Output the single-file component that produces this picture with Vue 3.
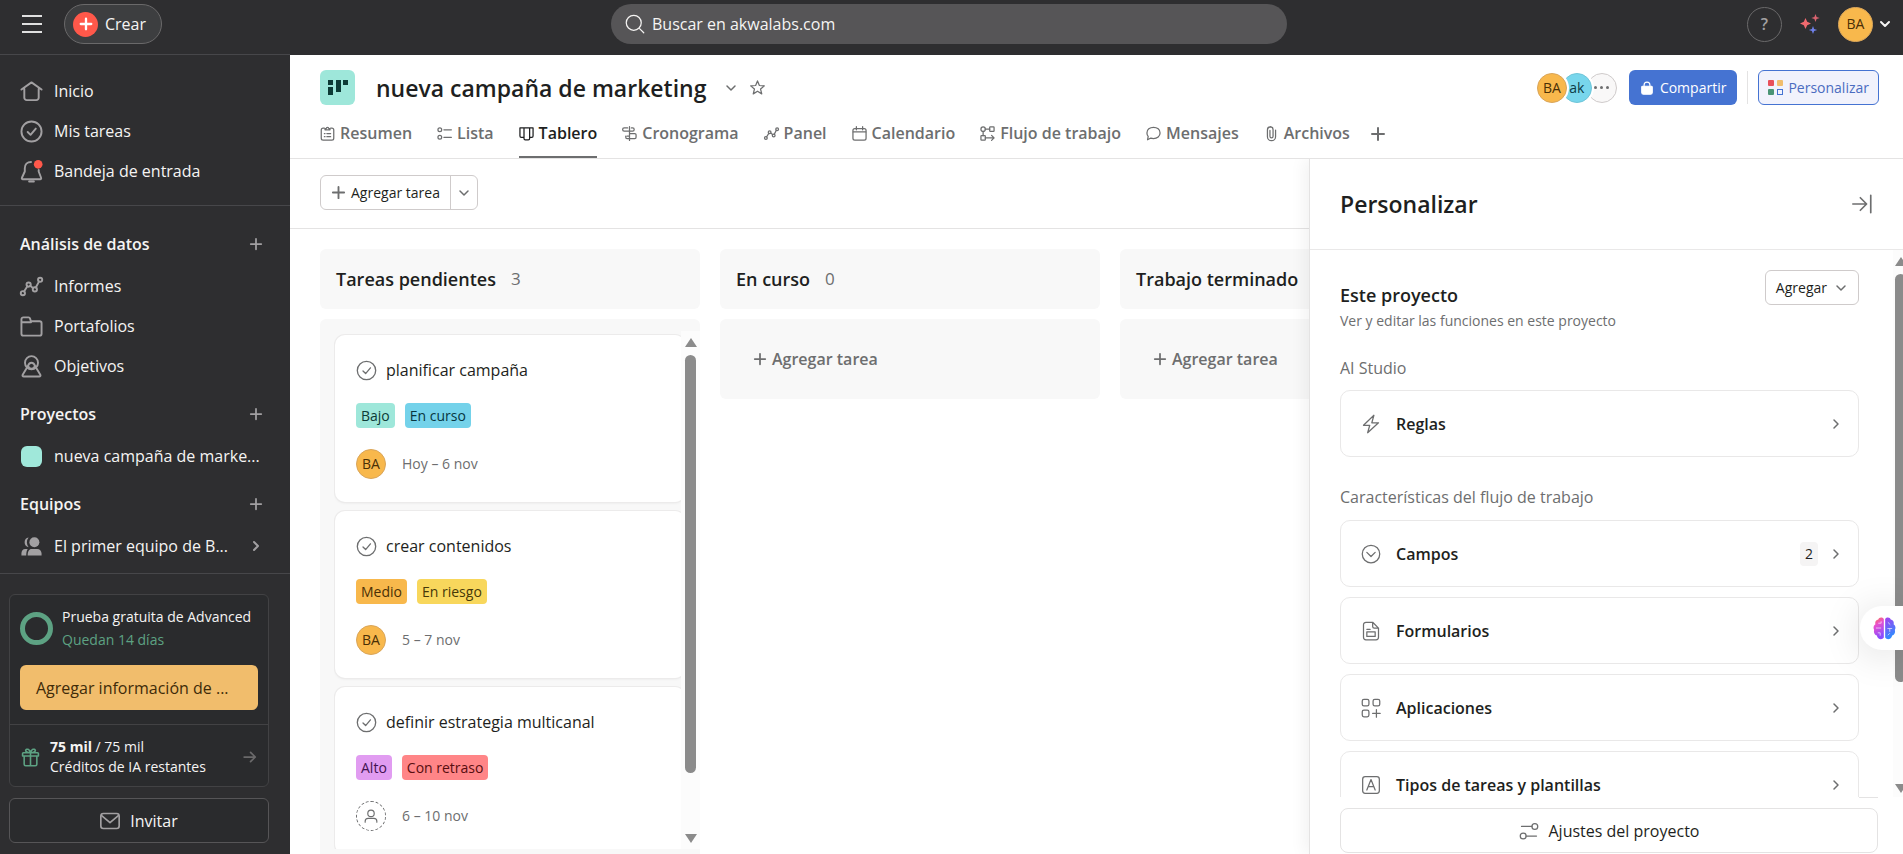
<script setup>
import { ref } from 'vue'

const icons = {
  home: '<path d="M1.500 10 12 2.500 22.500 10M4.500 9v9.500a2.500 2.500 0 0 0 2.500 2.500h10a2.500 2.500 0 0 0 2.500-2.500V9"/>',
  check: '<circle cx="12" cy="12" r="10.500"/><path d="m8 12.500 3 3 5.500-6.500"/>',
  bell: '<path d="M11.500 2C7.500 2 5 5 5 8.500v3.500L2 18.500c-.3.800 0 1.500 1 1.500h18c1 0 1.300-.7 1-1.500L19.500 12v-1.500M9.500 22.500h5"/><circle cx="19" cy="4.500" r="4.500" fill="#ff584a" stroke="none"/>',
  chart: '<circle cx="3" cy="19" r="2.200"/><circle cx="9" cy="10" r="2.200"/><circle cx="15.500" cy="15" r="2.200"/><circle cx="21" cy="5" r="2.200"/><path d="m4.200 17.200 3.500-5.400M10.700 11.300l3 2.400M16.500 13l3.300-6.100"/>',
  folder: '<path d="M1.500 19.500v-15a2 2 0 0 1 2-2H9a1.500 1.500 0 0 1 1.400 1l1 3h9.100a2 2 0 0 1 2 2v11a2 2 0 0 1-2 2h-17a2 2 0 0 1-2-2ZM1.500 7.500h10"/>',
  goal: '<circle cx="12" cy="8" r="6.800"/><path d="m8.300 11.500-5.500 9c-.5 1 0 2 1.200 2h16c1.200 0 1.700-1 1.200-2l-5.500-9C14.800 8.500 13.500 8 12 8s-2.800.5-3.700 3.500ZM8.500 11.500c1 3.800 6 3.800 7 0"/>',
  team: '<g fill="currentColor" stroke="none"><circle cx="15" cy="7.500" r="5.200"/><path d="M9 2.500a5.200 5.200 0 0 0 0 10.200 8 8 0 0 1 0-10.200ZM8 21.500c0-4.500 1.500-7 4-7h6c2.500 0 4.500 2 4.500 4.500v2.500ZM6.500 21.500H1.500V19c0-2.500 1.500-4.500 4-4.500h2.500c-1 1.500-1.500 4-1.500 7Z"/></g>',
  plus: '<path d="M12 3v18M3 12h18"/>',
  right: '<path d="m8 4 8 8-8 8"/>',
  down: '<path d="m4 8 8 8 8-8"/>',
  arrow: '<path d="M2 12h19M13 4l8 8-8 8"/>',
  gift: '<path d="M4 10v10.500a2 2 0 0 0 2 2h12a2 2 0 0 0 2-2V10M3 6h18a1 1 0 0 1 1 1v3H2V7a1 1 0 0 1 1-1ZM12 6v16M12 6C8 6 5.500 4.500 6 2.800 6.800.500 11 1 12 6ZM12 6c4 0 6.500-1.500 6-3.200C17.200.500 13 1 12 6Z"/>',
  mail: '<rect x="1" y="3" width="22" height="18" rx="3"/><path d="m2 5.500 10 8.500L22 5.500"/>',
  search: '<circle cx="10.500" cy="10.500" r="9"/><path d="m17.500 17.500 5 5"/>',
  star: '<path d="m12 1.500 3 7.300 7.900.6-6 5.100 1.900 7.700-6.800-4.200-6.800 4.200 1.900-7.700-6-5.100 7.900-.6Z"/>',
  lock: '<path d="M3 10.500A1.500 1.500 0 0 1 4.500 9h15a1.500 1.500 0 0 1 1.500 1.500v9a3 3 0 0 1-3 3H6a3 3 0 0 1-3-3Z" fill="currentColor"/><path d="M7 9.500V7a5 5 0 0 1 10 0v2.500"/>',
  resumen: '<path d="M7 3.500H5a3 3 0 0 0-3 3v13a3 3 0 0 0 3 3h14a3 3 0 0 0 3-3v-13a3 3 0 0 0-3-3h-2"/><path d="M8 6V4h2a2 2 0 0 1 4 0h2v2ZM7 12h1M11 12h6M7 17h1M11 17h6"/>',
  lista: '<circle cx="4.500" cy="6" r="3"/><circle cx="4.500" cy="18" r="3"/><path d="M11 6h12M11 18h12"/>',
  tablero: '<path d="M1.500 3h21v13a2 2 0 0 1-2 2H17M1.500 3v13a2 2 0 0 0 2 2H8M8 3v17a2 2 0 0 0 2 2h5a2 2 0 0 0 2-2V3"/>',
  cronograma: '<path d="M12 1v22M9 3H3.500a2.500 2.500 0 0 0 0 5H17a2.500 2.500 0 0 0 0-5h-2M12 16h-4M12 12h8.500a2 2 0 0 1 2 2v4a2 2 0 0 1-2 2H8a2 2 0 0 1-2-2v-2"/>',
  calendario: '<rect x="1.500" y="4" width="21" height="18.500" rx="3"/><path d="M2 9.500h20M7 1v5M17 1v5"/>',
  flujo: '<circle cx="5" cy="5" r="3.500"/><rect x="15.500" y="1.500" width="7" height="7" rx="1"/><rect x="1.500" y="15.500" width="7" height="7" rx="1"/><path d="M8.500 5h7M5 8.500v7M8.500 19h14M18.500 15l4 4-4 4"/>',
  mensajes: '<path d="M12 2c6 0 10.500 3.800 10.500 9S18 20 12 20c-1.500 0-3-.2-4.300-.7L2.500 22l1-5.500C2.200 15 1.500 13 1.500 11c0-5.200 4.500-9 10.500-9Z"/>',
  archivos: '<path d="M9.500 7v9.500a2.500 2.500 0 0 0 5 0V6a4.500 4.500 0 0 0-9 0v11a6.500 6.500 0 0 0 13 0V6.500M5.500 6A5 5 0 0 1 14 3"/>',
  rayo: '<path d="M15.500 1.500 3 13.500h7.500L8 22.500l13-12h-8Z"/>',
  campos: '<circle cx="12" cy="12" r="10.500"/><path d="m7 10 5 5 5-5"/>',
  form: '<path d="M14 1.500H6a3 3 0 0 0-3 3v15a3 3 0 0 0 3 3h12a3 3 0 0 0 3-3v-11ZM14 1.500v5a2 2 0 0 0 2 2h5M7 10h4"/><rect x="7" y="13" width="10" height="5.500"/>',
  apps: '<rect x="1.500" y="1.500" width="8" height="8" rx="2"/><rect x="14.500" y="1.500" width="8" height="8" rx="2"/><rect x="1.500" y="14.500" width="8" height="8" rx="2"/><path d="M18.500 14v9M14 18.500h9"/>',
  tipos: '<rect x="2" y="2" width="20" height="20" rx="3"/><path d="m7 18 5-12.500L17 18M8.800 14h6.400"/>',
  ajustes: '<circle cx="19" cy="6.500" r="3.500"/><circle cx="5" cy="18" r="3.500"/><path d="M3 6.500h12.500M8.500 18H21"/>',
  person: '<circle cx="12" cy="7.500" r="5.500"/><path d="M2 22.500v-1.500a5 5 0 0 1 5-5h10a5 5 0 0 1 5 5v1.500"/>',
  collapse: '<path d="M1 12h16M10 4.500l7.500 7.500-7.500 7.500M22.500 1.500v21"/>'
}

const navMain = [
  { icon: 'home', label: 'Inicio' },
  { icon: 'check', label: 'Mis tareas' },
  { icon: 'bell', label: 'Bandeja de entrada' }
]
const navData = [
  { icon: 'chart', label: 'Informes' },
  { icon: 'folder', label: 'Portafolios' },
  { icon: 'goal', label: 'Objetivos' }
]
const tabs = [
  { icon: 'resumen', label: 'Resumen' },
  { icon: 'lista', label: 'Lista' },
  { icon: 'tablero', label: 'Tablero' },
  { icon: 'cronograma', label: 'Cronograma' },
  { icon: 'chart', label: 'Panel' },
  { icon: 'calendario', label: 'Calendario' },
  { icon: 'flujo', label: 'Flujo de trabajo' },
  { icon: 'mensajes', label: 'Mensajes' },
  { icon: 'archivos', label: 'Archivos' }
]
const activeTab = ref('Tablero')
const tasks = [
  { name: 'planificar campaña', tags: [['Bajo', 'aqua'], ['En curso', 'blue']], who: 'BA', date: 'Hoy – 6 nov' },
  { name: 'crear contenidos', tags: [['Medio', 'orange'], ['En riesgo', 'yellow']], who: 'BA', date: '5 – 7 nov' },
  { name: 'definir estrategia multicanal', tags: [['Alto', 'purple'], ['Con retraso', 'red']], who: '', date: '6 – 10 nov' }
]
const emptyColumns = [
  { name: 'En curso', count: '0' },
  { name: 'Trabajo terminado', count: '' }
]
const features = [
  { icon: 'campos', label: 'Campos', count: 2 },
  { icon: 'form', label: 'Formularios' },
  { icon: 'apps', label: 'Aplicaciones' },
  { icon: 'tipos', label: 'Tipos de tareas y plantillas' }
]
</script>

<template>
  <div class="app">
    <header class="topbar">
      <div class="top-left">
        <button class="plain burger" aria-label="Menú"><i></i><i></i><i></i></button>
        <button class="create">
          <span class="create-dot"><svg class="ic s14 heavy" viewBox="0 0 24 24" v-html="icons.plus"></svg></span>Crear
        </button>
      </div>
      <label class="search">
        <svg class="ic s20" viewBox="0 0 24 24" v-html="icons.search"></svg>
        <input type="text" placeholder="Buscar en akwalabs.com" aria-label="Buscar" />
      </label>
      <div class="top-right">
        <button class="help" aria-label="Ayuda">?</button>
        <button class="plain sparkles" aria-label="Asistente de IA">
          <svg viewBox="0 0 20 20">
            <path fill="#f06a6f" d="M5.500 4 7.200 7.800 11 9.500 7.200 11.200 5.500 15 3.800 11.200 0 9.500 3.800 7.800Z" />
            <path fill="#d9636f" d="m15.500 0 1.100 2.900 3.100 1.100-3.100 1.100-1.100 2.900-1.100-2.900L11.300 4l3.100-1.100Z" />
            <path fill="#6f80e8" d="m13 12 1.100 2.900 3.100 1.100-3.100 1.100L13 20l-1.100-2.900L8.800 16l3.100-1.100Z" />
          </svg>
        </button>
        <button class="plain account" aria-label="Cuenta">
          <span class="avatar big">BA</span>
          <svg class="ic s12 heavy" viewBox="0 0 24 24" v-html="icons.down"></svg>
        </button>
      </div>
    </header>

    <div class="body">
      <aside class="sidebar">
        <nav class="nav nav-top">
          <a v-for="n in navMain" :key="n.label" href="#" class="nav-item">
            <svg class="ic s23" viewBox="0 0 24 24" v-html="icons[n.icon]"></svg><span>{{ n.label }}</span>
          </a>
        </nav>
        <nav class="nav nav-groups">
          <div class="group">
            <h2>Análisis de datos</h2>
            <button class="plain" aria-label="Agregar"><svg class="ic s14 mid" viewBox="0 0 24 24" v-html="icons.plus"></svg></button>
          </div>
          <a v-for="n in navData" :key="n.label" href="#" class="nav-item">
            <svg class="ic s23" viewBox="0 0 24 24" v-html="icons[n.icon]"></svg><span>{{ n.label }}</span>
          </a>
          <div class="group next">
            <h2>Proyectos</h2>
            <button class="plain" aria-label="Agregar"><svg class="ic s14 mid" viewBox="0 0 24 24" v-html="icons.plus"></svg></button>
          </div>
          <a href="#" class="nav-item"><b class="swatch"></b><span>nueva campaña de marke...</span></a>
          <div class="group next">
            <h2>Equipos</h2>
            <button class="plain" aria-label="Agregar"><svg class="ic s14 mid" viewBox="0 0 24 24" v-html="icons.plus"></svg></button>
          </div>
          <a href="#" class="nav-item">
            <svg class="ic s23" viewBox="0 0 24 24" v-html="icons.team"></svg>
            <span>El primer equipo de B...</span>
            <svg class="ic s12 heavy" viewBox="0 0 24 24" v-html="icons.right"></svg>
          </a>
        </nav>
        <footer class="side-foot">
          <section class="trial">
            <div class="trial-top">
              <span class="ring"></span>
              <div class="trial-text">
                <p>Prueba gratuita de Advanced</p>
                <p class="green">Quedan 14 días</p>
              </div>
            </div>
            <button class="billing">Agregar información de ...</button>
            <a href="#" class="credits">
              <svg class="ic s19 gift" viewBox="0 0 24 24" v-html="icons.gift"></svg>
              <span><strong>75 mil</strong> / 75 mil<br />Créditos de IA restantes</span>
              <svg class="ic s14 mid" viewBox="0 0 24 24" v-html="icons.arrow"></svg>
            </a>
          </section>
          <button class="invite"><svg class="ic s20" viewBox="0 0 24 24" v-html="icons.mail"></svg>Invitar</button>
        </footer>
      </aside>

      <main class="main">
        <header class="project">
          <div class="title-row">
            <span class="project-icon">
              <svg viewBox="0 0 20 16" fill="#0d3b36">
                <rect width="5" height="5" /><rect y="7" width="5" height="8" />
                <rect x="8" width="5" height="12" /><rect x="15" width="5" height="5" />
              </svg>
            </span>
            <h1>nueva campaña de marketing</h1>
            <button class="plain" aria-label="Acciones"><svg class="ic s12 mid" viewBox="0 0 24 24" v-html="icons.down"></svg></button>
            <button class="plain" aria-label="Favorito"><svg class="ic s15" viewBox="0 0 24 24" v-html="icons.star"></svg></button>
            <div class="title-actions">
              <div class="members">
                <span class="avatar">BA</span><span class="avatar cyan">ak</span><span class="avatar more"><i></i><i></i><i></i></span>
              </div>
              <button class="share"><svg class="ic s14" viewBox="0 0 24 24" v-html="icons.lock"></svg>Compartir</button>
              <span class="rule"></span>
              <button class="customize">
                <svg class="grid-ic" viewBox="0 0 15 15">
                  <rect width="6" height="6" rx="1" fill="#e8505b" /><rect x="9" width="6" height="6" rx="1" fill="#f1bd6c" />
                  <rect y="9" width="6" height="6" rx="1" fill="#4a9475" /><rect x="9.500" y="9.500" width="5" height="5" fill="none" stroke="#4573d2" />
                </svg>Personalizar
              </button>
            </div>
          </div>
          <nav class="tabs">
            <a v-for="t in tabs" :key="t.label" href="#" class="tab" :class="{ active: t.label === activeTab }" @click.prevent="activeTab = t.label">
              <svg class="ic s15" viewBox="0 0 24 24" v-html="icons[t.icon]"></svg>{{ t.label }}
            </a>
            <button class="plain add-tab" aria-label="Agregar vista"><svg class="ic s16 mid" viewBox="0 0 24 24" v-html="icons.plus"></svg></button>
          </nav>
        </header>

        <div class="work">
          <section class="board-area">
            <div class="toolbar">
              <div class="split">
                <button><svg class="ic s15 mid" viewBox="0 0 24 24" v-html="icons.plus"></svg>Agregar tarea</button>
                <button aria-label="Más opciones"><svg class="ic s12 mid" viewBox="0 0 24 24" v-html="icons.down"></svg></button>
              </div>
            </div>
            <div class="board">
              <section class="column">
                <header class="col-head"><h3>Tareas pendientes</h3><span>3</span></header>
                <div class="col-body filled">
                  <div class="cards">
                    <article v-for="t in tasks" :key="t.name" class="card">
                      <div class="card-name"><svg class="ic s21 thin" viewBox="0 0 24 24" v-html="icons.check"></svg>{{ t.name }}</div>
                      <div class="tags"><span v-for="g in t.tags" :key="g[0]" class="tag" :class="g[1]">{{ g[0] }}</span></div>
                      <div class="card-meta">
                        <span v-if="t.who" class="avatar">{{ t.who }}</span>
                        <span v-else class="avatar nobody"><svg class="ic s14" viewBox="0 0 24 24" v-html="icons.person"></svg></span>
                        {{ t.date }}
                      </div>
                    </article>
                  </div>
                  <div class="bar"><i class="up"></i><i class="thumb"></i><i class="dn"></i></div>
                </div>
              </section>
              <section v-for="c in emptyColumns" :key="c.name" class="column">
                <header class="col-head"><h3>{{ c.name }}</h3><span v-if="c.count">{{ c.count }}</span></header>
                <div class="col-body empty">
                  <button class="plain add-task"><svg class="ic s14 mid" viewBox="0 0 24 24" v-html="icons.plus"></svg>Agregar tarea</button>
                </div>
              </section>
            </div>
          </section>

          <aside class="panel">
            <header class="panel-head">
              <h2>Personalizar</h2>
              <button class="plain" aria-label="Cerrar panel"><svg class="ic s20" viewBox="0 0 24 24" v-html="icons.collapse"></svg></button>
            </header>
            <div class="panel-scroll">
              <div class="panel-content">
                <div class="panel-intro">
                  <div><h3>Este proyecto</h3><p>Ver y editar las funciones en este proyecto</p></div>
                  <button class="add">Agregar<svg class="ic s12 mid" viewBox="0 0 24 24" v-html="icons.down"></svg></button>
                </div>
                <h4>AI Studio</h4>
                <button class="feature">
                  <svg class="ic s20 thin" viewBox="0 0 24 24" v-html="icons.rayo"></svg><span>Reglas</span>
                  <svg class="ic s12 mid" viewBox="0 0 24 24" v-html="icons.right"></svg>
                </button>
                <h4 class="second">Características del flujo de trabajo</h4>
                <div class="features">
                  <button v-for="f in features" :key="f.label" class="feature">
                    <svg class="ic s20 thin" viewBox="0 0 24 24" v-html="icons[f.icon]"></svg><span>{{ f.label }}</span>
                    <em v-if="f.count">{{ f.count }}</em>
                    <svg class="ic s12 mid" viewBox="0 0 24 24" v-html="icons.right"></svg>
                  </button>
                </div>
              </div>
              <div class="bar panel-bar"><i class="up"></i><i class="thumb"></i><i class="dn"></i></div>
            </div>
            <footer class="panel-foot">
              <button><svg class="ic s20 thin" viewBox="0 0 24 24" v-html="icons.ajustes"></svg>Ajustes del proyecto</button>
            </footer>
          </aside>
        </div>
      </main>
    </div>

    <button class="floating" aria-label="Asistente">
      <svg viewBox="0 0 24 24">
        <defs>
          <linearGradient id="brainL" x1="0" y1="0" x2="0.300" y2="1"><stop offset="0" stop-color="#ff7a3d" /><stop offset=".4" stop-color="#e84fd0" /><stop offset="1" stop-color="#8a4dff" /></linearGradient>
          <linearGradient id="brainR" x1="0" y1="0" x2="0.300" y2="1"><stop offset="0" stop-color="#a63df0" /><stop offset="1" stop-color="#2f8cff" /></linearGradient>
        </defs>
        <path fill="url(#brainL)" d="M11.300 2C9.500-.5 6 .2 5.500 2.700 3 3 1.800 5.500 2.500 7.500.5 9 0 11.500 1.200 13.500.5 16 1.500 18.500 4 19.300c.5 3.500 5 5.500 7.300 2.200Z" />
        <path fill="url(#brainR)" d="M12.700 2c1.800-2.500 5.300-1.800 5.800.7 2.500.3 3.700 2.800 3 4.800 2 1.500 2.500 4 1.300 6 .7 2.500-.3 5-2.800 5.800-.5 3.500-5 5.500-7.300 2.200Z" />
        <path fill="none" stroke="#fff" stroke-opacity=".65" d="M5.500 6.500h3v-2M3 11.500h5.500M5 16.500h2.500v3M15.500 5.500 18 8M15 12h5M17.500 12v3.500M15.500 19l2-2" />
      </svg>
    </button>
  </div>
</template>

<style>
body { margin: 0; }
</style>

<style scoped>
.app {
  height: 100vh; display: flex; flex-direction: column; overflow: hidden; position: relative;
  font-family: "Open Sans", "Noto Sans", sans-serif; font-size: 16px; line-height: 24px; color: #1e1f21; background: #fff;
}
.app *, .app *::before { box-sizing: border-box; }
h1, h2, h3, h4, p { margin: 0; font-weight: 600; }
button, input { font: inherit; color: inherit; }
button { cursor: pointer; padding: 0; margin: 0; }
a { color: inherit; text-decoration: none; }
.plain { border: 0; background: none; display: flex; align-items: center; }
.ic { fill: none; stroke: currentColor; stroke-width: 2; stroke-linecap: round; stroke-linejoin: round; flex: none; display: block; overflow: visible; }
.thin { stroke-width: 1.500; }
.mid { stroke-width: 3; }
.heavy { stroke-width: 4; }
.s12 { width: 12px; height: 12px; }
.s14 { width: 14px; height: 14px; }
.s15 { width: 15px; height: 15px; }
.s16 { width: 16px; height: 16px; }
.s19 { width: 19px; height: 19px; }
.s20 { width: 20px; height: 20px; }
.s21 { width: 21px; height: 21px; }
.s23 { width: 23px; height: 23px; }

.topbar { flex: none; height: 55px; padding: 0 12px 7px 7px; background: #2e2e30; color: #f5f4f3; display: grid; grid-template-columns: 1fr minmax(200px, 676px) 1fr; align-items: center; }
.top-left { display: flex; align-items: center; gap: 22px; padding-left: 15px; }
.burger { flex-direction: column; justify-content: space-between; width: 20px; height: 18px; }
.burger i { display: block; width: 20px; height: 2px; background: #e0e0e0; }
.create { height: 40px; display: flex; align-items: center; gap: 7px; padding: 0 15px 0 8px; border: 1px solid #6a696a; border-radius: 20px; background: #3d3e40; }
.create-dot { width: 25px; height: 25px; border-radius: 50%; background: #ff584a; color: #fff; display: grid; place-items: center; }
.search { height: 40px; border-radius: 20px; background: #565557; display: flex; align-items: center; gap: 7px; padding: 0 14px; }
.search .ic { stroke-width: 1.500; }
.search input { flex: 1; min-width: 0; border: 0; outline: 0; background: none; padding: 0; }
.search input::placeholder { color: #f5f4f3; opacity: 1; }
.top-right { display: flex; justify-content: flex-end; align-items: center; gap: 18px; }
.help { width: 35px; height: 35px; border-radius: 50%; border: 1px solid #6a696a; background: none; color: #a2a0a2; font-weight: 600; }
.sparkles svg { width: 20px; height: 20px; display: block; }
.account { gap: 6px; }
.avatar { width: 30px; height: 30px; flex: none; border-radius: 50%; background: #f8b84c; border: 1px solid #d9a55a; color: #4a2f06; font-size: 14px; line-height: 1; display: grid; place-items: center; }
.avatar.big { width: 35px; height: 35px; }

.body { flex: 1; min-height: 0; display: flex; }
.sidebar { width: 290px; flex: none; background: #2e2e30; color: #f5f4f3; display: flex; flex-direction: column; border-top: 1px solid #47474a; margin-top: -1px; }
.nav { padding: 0 19px 0 20px; }
.nav-top { padding-top: 16px; padding-bottom: 14px; border-bottom: 1px solid #47474a; }
.nav-item { height: 40px; display: flex; align-items: center; gap: 11px; }
.nav-item .ic { color: #a2a0a2; }
.nav-item span { flex: 1; min-width: 0; white-space: nowrap; overflow: hidden; text-overflow: ellipsis; }
.nav-item .ic.s12 { margin-right: 9px; }
.nav-groups { padding-top: 16px; padding-bottom: 7px; flex: 1; min-height: 0; overflow: hidden; }
.group { height: 44px; display: flex; align-items: center; justify-content: space-between; padding-right: 8px; color: #a2a0a2; }
.group h2 { font-size: 16px; color: #f5f4f3; }
.group.next { margin-top: 6px; }
.swatch { width: 21px; height: 21px; margin: 0 1px; border-radius: 6px; background: #a0e8da; flex: none; }
.side-foot { flex: none; padding: 20px 21px 11px 9px; border-top: 1px solid #47474a; display: flex; flex-direction: column; gap: 11px; }
.trial { border: 1px solid #424244; border-radius: 6px; background: #2a2b2d; font-size: 14px; line-height: 20px; }
.trial-top { display: flex; align-items: center; gap: 9px; padding: 10px 10px 0; }
.trial-text { white-space: nowrap; line-height: 23px; }
.trial p { font-weight: 400; }
.green { color: #5da283; }
.ring { width: 33px; height: 33px; border-radius: 50%; border: 5px solid #5da283; flex: none; }
.billing { display: block; width: calc(100% - 20px); height: 45px; margin: 14px 10px; padding: 0 16px; border: 0; border-radius: 6px; background: #f1bd6c; color: #402b09; font-size: 16px; text-align: left; white-space: nowrap; overflow: hidden; text-overflow: ellipsis; }
.credits { display: flex; align-items: center; gap: 10px; border-top: 1px solid #424244; padding: 12px 11px 9px; }
.credits span { flex: 1; }
.credits .ic { color: #6a696a; }
.credits .gift { color: #5da283; }
.invite { height: 45px; border: 1px solid #565557; border-radius: 6px; background: #2a2b2d; display: flex; align-items: center; justify-content: center; gap: 10px; }
.invite .ic { color: #a2a0a2; }

.main { flex: 1; min-width: 0; display: flex; flex-direction: column; }
.project { flex: none; padding: 15px 24px 0 30px; border-bottom: 1px solid #e4e3e3; }
.title-row { height: 35px; display: flex; align-items: center; gap: 13px; color: #6d6e6f; }
.project-icon { width: 35px; height: 35px; border-radius: 6px; background: #9ee7da; display: grid; place-items: center; flex: none; }
.project-icon svg { width: 20px; height: 16px; display: block; }
h1 { font-size: 23px; line-height: 35px; color: #1e1f21; white-space: nowrap; margin: 2px 6px 0 8px; }
.title-actions { margin-left: auto; display: flex; align-items: center; }
.members { display: flex; margin-right: 12px; isolation: isolate; }
.members .avatar { box-shadow: 0 0 0 2px #fff; z-index: 3; position: relative; }
.members .avatar + .avatar { margin-left: -5px; }
.members .cyan { background: #78d6ec; border-color: #6fc5d8; color: #0c3b46; z-index: 2; }
.members .more { background: #f9f8f8; border-color: #cfcbcb; z-index: 1; box-shadow: none; display: flex; align-items: center; justify-content: center; gap: 3px; }
.more i { width: 3px; height: 3px; border-radius: 50%; background: #6d6e6f; }
.share, .customize { height: 35px; display: flex; align-items: center; border-radius: 6px; font-size: 14px; }
.share { padding: 0 11px; gap: 6px; border: 0; background: #4573d2; color: #fff; }
.rule { width: 1px; height: 33px; background: #e4e3e3; margin: 0 10px; }
.customize { padding: 0 9px; gap: 5px; border: 1px solid #4573d2; background: #f1f2fc; color: #4a6cc0; }
.grid-ic { width: 15px; height: 15px; }
.tabs { display: flex; align-items: stretch; gap: 25px; margin-top: 8px; height: 45px; font-size: 16px; font-weight: 600; color: #6d6e6f; }
.tab { display: flex; align-items: center; gap: 5px; padding-bottom: 5px; white-space: nowrap; position: relative; }
.tab.active { color: #1e1f21; }
.tab.active::after { content: ""; position: absolute; left: 0; right: 0; bottom: 0; height: 2px; background: #6d6e6f; }
.add-tab { padding-bottom: 4px; margin-left: -5px; color: #6d6e6f; }

.work { flex: 1; min-height: 0; display: flex; }
.board-area { flex: 1; min-width: 0; display: flex; flex-direction: column; overflow: hidden; }
.toolbar { flex: none; height: 70px; padding: 0 30px 2px; display: flex; align-items: center; border-bottom: 1px solid #e4e3e3; }
.split { display: flex; height: 35px; border: 1px solid #cfcbcb; border-radius: 6px; font-size: 14px; }
.split button { border: 0; background: none; display: flex; align-items: center; gap: 5px; padding: 0 10px; white-space: nowrap; }
.split button + button { border-left: 1px solid #cfcbcb; padding: 0 7px; }
.split .ic { color: #6d6e6f; }
.board { flex: 1; min-height: 0; padding: 20px 0 0 30px; display: flex; gap: 20px; }
.column { width: 380px; flex: none; display: flex; flex-direction: column; gap: 10px; }
.col-head { height: 60px; flex: none; border-radius: 6px; background: #f8f8f8; display: flex; align-items: center; gap: 15px; padding: 0 16px; color: #6d6e6f; white-space: nowrap; }
.col-head h3 { font-size: 18px; color: #1e1f21; }
.col-head span { font-size: 17px; }
.col-body { border-radius: 6px 6px 0 0; background: #f8f8f8; }
.filled { flex: 1; min-height: 0; padding: 12px 0 5px 14px; display: flex; }
.cards { flex: 1; min-width: 0; overflow: hidden; padding: 4px 0 0 1px; display: flex; flex-direction: column; gap: 9px; }
.card { flex: none; width: 350px; height: 167px; padding: 22px 21px; border-radius: 10px; background: #fff; box-shadow: 0 0 0 1px #ecebeb, 0 1px 3px #00000014; }
.card-name { display: flex; align-items: center; gap: 9px; height: 26px; }
.card-name .ic { color: #6d6e6f; }
.tags { display: flex; gap: 10px; margin-top: 20px; font-size: 14px; }
.tag { height: 25px; line-height: 25px; padding: 0 5px; border-radius: 4px; }
.aqua { background: #9ee7da; color: #0d3b36; }
.blue { background: #74d2ea; color: #07363f; }
.orange { background: #f8b84c; color: #4a2f06; }
.yellow { background: #f8d75c; color: #453809; }
.purple { background: #e19cf1; color: #431351; }
.red { background: #ff8587; color: #570e10; }
.card-meta { display: flex; align-items: center; gap: 16px; margin-top: 21px; font-size: 14px; color: #6d6e6f; }
.nobody { background: none; border: 1px dashed #6d6e6f; color: #6d6e6f; }
.bar { width: 19px; flex: none; background: #fcfcfc; display: flex; flex-direction: column; align-items: center; padding: 7px 0 6px; }
.up, .dn { border: 6px solid transparent; width: 0; height: 0; flex: none; }
.up { border-top: 0; border-bottom: 9px solid #8b8b8b; }
.dn { border-bottom: 0; border-top: 9px solid #8b8b8b; }
.thumb { width: 11px; border-radius: 6px; background: #8b8b8b; flex: 418 1 0; margin: 8px 0 auto; max-height: 418px; }
.empty { border-radius: 6px; height: 80px; padding: 0 33px; display: flex; }
.add-task { gap: 5px; font-weight: 600; font-size: 16px; color: #6d6e6f; }

.panel { width: 594px; flex: none; position: relative; z-index: 2; background: #fff; border-left: 1px solid #e4e3e3; box-shadow: -4px 0 16px #0000000f; clip-path: inset(0 0 0 -24px); display: flex; flex-direction: column; }
.panel-head { flex: none; height: 91px; padding: 0 31px 0 30px; display: flex; align-items: center; justify-content: space-between; border-bottom: 1px solid #e9e8e8; color: #6d6e6f; }
.panel-head h2 { font-size: 23px; line-height: 32px; color: #1e1f21; }
.panel-scroll { flex: 1; min-height: 0; overflow: hidden; display: flex; }
.panel-content { flex: 1; min-width: 0; padding: 20px 34px 0 30px; }
.panel-intro { display: flex; justify-content: space-between; align-items: flex-start; }
.panel-intro h3 { font-size: 18px; line-height: 28px; padding-top: 11px; }
.panel-intro p { font-size: 14px; line-height: 24px; font-weight: 400; color: #6d6e6f; }
.add { height: 35px; display: flex; align-items: center; gap: 8px; padding: 0 11px 0 10px; border: 1px solid #cfcbcb; border-radius: 6px; background: #fff; font-size: 14px; }
.add .ic { color: #6d6e6f; }
.panel h4 { font-weight: 400; font-size: 16px; line-height: 24px; color: #6d6e6f; margin: 23px 0 10px; }
.panel h4.second { margin: 28px 0 11px; }
.feature { width: 100%; height: 67px; flex: none; display: flex; align-items: center; padding: 0 16px 0 20px; border: 1px solid #e9e8e8; border-radius: 10px; background: #fff; text-align: left; font-size: 16px; font-weight: 600; }
.feature .ic { color: #6d6e6f; }
.feature span { flex: 1; padding-left: 15px; }
.feature em { font-style: normal; font-weight: 400; font-size: 14px; width: 18px; text-align: center; background: #f5f4f4; border-radius: 4px; margin-right: 12px; }
.features { display: flex; flex-direction: column; gap: 10px; }
.panel-bar { width: 15px; margin-right: -5px; padding-bottom: 4px; }
.panel-bar .thumb { max-height: 408px; }
.panel-foot { flex: none; padding: 11px 25px 1px 30px; position: relative; }
.panel-foot::before { content: ""; position: absolute; top: 0; right: 25px; width: 19px; height: 1px; background: #e4e3e3; }
.panel-foot button { width: 100%; height: 45px; border: 1px solid #e4e3e3; border-radius: 8px; background: #fff; display: flex; align-items: center; justify-content: center; gap: 10px; }
.panel-foot .ic { color: #6d6e6f; }

.floating { position: absolute; z-index: 5; right: 0; top: 606px; width: 43px; height: 44px; border: 0; border-radius: 22px 0 0 22px; background: #fff; box-shadow: 0 4px 40px #00000024; display: flex; align-items: center; padding-left: 13px; }
.floating svg { width: 23px; height: 23px; display: block; }
</style>
